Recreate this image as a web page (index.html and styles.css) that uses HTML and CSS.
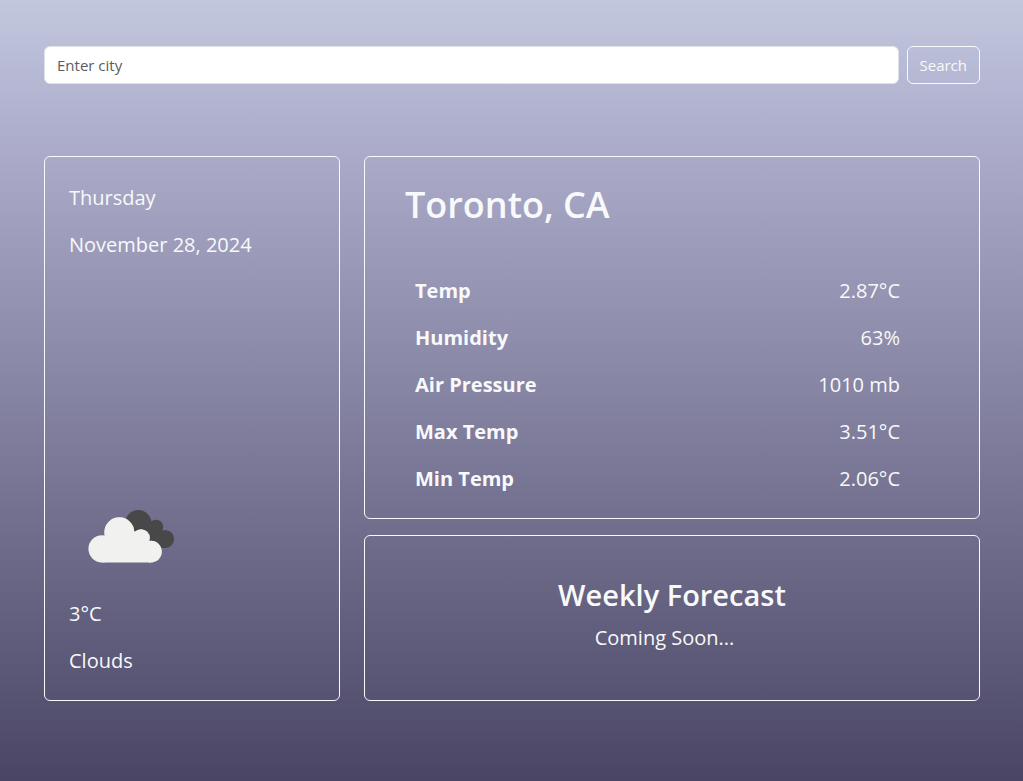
FILE: index.html
```html
<!DOCTYPE html>
<html lang="en">
<head>
<meta charset="utf-8">
<meta name="viewport" content="width=device-width, initial-scale=1">
<title>Weather</title>
<link rel="stylesheet" href="styles.css">
</head>
<body>
<main class="page">
  <form class="search">
    <input class="search-input" type="text" placeholder="Enter city" aria-label="Enter city">
    <button class="search-button" type="submit">Search</button>
  </form>
  <div class="layout">
    <section class="card today">
      <div class="date">
        <p>Thursday</p>
        <p>November 28, 2024</p>
      </div>
      <div class="summary">
        <svg class="weather-icon" viewBox="0 0 124 107" role="img" aria-label="Broken clouds">
          <g fill="#484849">
            <circle cx="69.3" cy="32.3" r="13.3"/>
            <circle cx="87" cy="36" r="7.3"/>
            <circle cx="96" cy="48" r="9.1"/>
            <path d="M60 32H85L96 48V57H80L58 44Z"/>
          </g>
          <g fill="#f1f1f0" stroke="#2d2d35" stroke-opacity=".35" stroke-width="1">
            <circle cx="50.3" cy="41.3" r="15"/>
            <circle cx="72" cy="47" r="8.8"/>
            <circle cx="82" cy="60.6" r="10.8"/>
          </g>
          <g fill="#f1f1f0">
            <circle cx="33" cy="57.8" r="13.6"/>
            <circle cx="50.3" cy="41.3" r="15"/>
            <circle cx="72" cy="47" r="8.8"/>
            <circle cx="82" cy="60.6" r="10.8"/>
            <path d="M33 71.4V50L50 40H65L72 46L80.7 50.2L82 71.4Z"/>
          </g>
        </svg>
        <p>3°C</p>
        <p>Clouds</p>
      </div>
    </section>
    <div class="details">
      <section class="card current">
        <h1>Toronto, CA</h1>
        <table class="readings">
          <tbody>
            <tr><th scope="row">Temp</th><td>2.87°C</td></tr>
            <tr><th scope="row">Humidity</th><td>63%</td></tr>
            <tr><th scope="row">Air Pressure</th><td>1010 mb</td></tr>
            <tr><th scope="row">Max Temp</th><td>3.51°C</td></tr>
            <tr><th scope="row">Min Temp</th><td>2.06°C</td></tr>
          </tbody>
        </table>
      </section>
      <section class="card forecast">
        <h2>Weekly Forecast</h2>
        <p>Coming Soon...</p>
      </section>
    </div>
  </div>
</main>
</body>
</html>
```
FILE: styles.css
```css
* {
  box-sizing: border-box;
}

body {
  margin: 0;
  min-height: 100vh;
  background: linear-gradient(#c2c7dd, #b0b1cf 15%, #4a4564);
  color: #f8f9fa;
  font-family: "Segoe UI", "Open Sans", "Noto Sans", sans-serif;
  font-size: 20px;
  line-height: 31px;
}

h1, h2, p {
  margin: 0;
}

.page {
  padding: 46px 43px 80px 44px;
}

.search {
  display: flex;
  gap: 8px;
  margin-bottom: 72px;
}

.search-input,
.search-button {
  padding: 6px 12px;
  border: 1px solid #dee2e6;
  border-radius: 6px;
  font: inherit;
  font-size: 15px;
  line-height: 24px;
}

.search-input {
  flex: 1;
  min-width: 0;
  background: #fff;
  color: #212529;
}

.search-input::placeholder {
  color: #595c5f;
  opacity: 1;
}

.search-button {
  border-color: #f8f9fa;
  background: transparent;
  color: #f8f9fa;
}

.layout {
  display: grid;
  grid-template-columns: repeat(12, 1fr);
  gap: 24px;
}

.card {
  border: 1px solid #f8f9fa;
  border-radius: 6px;
}

.today {
  grid-column: span 4;
  display: flex;
  flex-direction: column;
  justify-content: space-between;
  padding: 25px 24px 24px;
}

.date,
.summary {
  display: flex;
  flex-direction: column;
  gap: 16px;
}

.weather-icon {
  display: block;
  width: 124px;
  height: 107px;
  margin-bottom: -16px;
}

.details {
  grid-column: span 8;
  display: flex;
  flex-direction: column;
  gap: 16px;
}

.current {
  padding: 24px 79px 16px 40px;
}

.current h1 {
  margin-bottom: 38px;
  font-size: 36px;
  font-weight: 600;
  line-height: 48px;
}

.readings {
  width: 100%;
  border-collapse: collapse;
}

.readings th,
.readings td {
  padding: 8px 0;
}

.readings th {
  padding-left: 10px;
  font-weight: 700;
  text-align: left;
}

.readings td {
  text-align: right;
}

.forecast {
  padding: 40px 24px 47px;
  text-align: center;
}

.forecast h2 {
  margin-bottom: 8px;
  font-size: 29px;
  font-weight: 600;
  line-height: 38px;
}

.forecast p {
  padding-right: 15px;
}
```
